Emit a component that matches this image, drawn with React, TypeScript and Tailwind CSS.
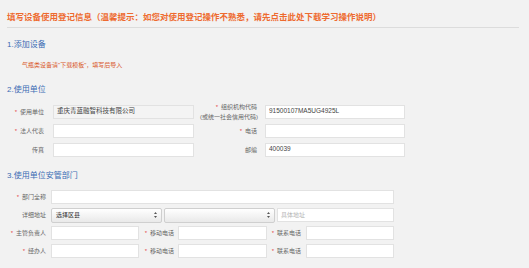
import React from 'react';

const cjk = { fontFamily: '"Liberation Sans", "Noto Sans CJK SC", sans-serif' };

const Star = () => <span className="text-[#e5484d] mr-[3px]">*</span>;

const Field: React.FC<{ w: string; value?: string; placeholder?: string; muted?: boolean }> = ({ w, value, placeholder, muted }) => (
  <div
    className={`${w} h-[14px] border border-[#e2e2e2] flex items-center px-[3px] text-[6.5px] leading-none ${
      muted ? 'bg-[#f4f4f4] text-[#444]' : 'bg-white text-[#444]'
    }`}
  >
    {value ? value : <span className="text-[#b5b5b5] text-[6px]">{placeholder}</span>}
  </div>
);

const FakeSelect: React.FC<{ w: string; label?: string }> = ({ w, label }) => (
  <div className={`${w} h-[15px] border border-[#cfcfcf] rounded-[2px] bg-gradient-to-b from-white to-[#e9e9e9] flex items-center justify-between px-[4px] text-[6px] text-[#333] leading-none`}>
    <span>{label}</span>
    <svg width="3" height="6" viewBox="0 0 3 6">
      <path d="M1.5 0 L3 2 L0 2 Z" fill="#555" />
      <path d="M0 4 L3 4 L1.5 6 Z" fill="#555" />
    </svg>
  </div>
);

const Label: React.FC<{ w: string; req?: boolean; children: React.ReactNode }> = ({ w, req, children }) => (
  <div className={`${w} shrink-0 text-right text-[6px] leading-[10px] text-[#666]`}>
    {req && <Star />}
    {children}
  </div>
);

export default function App() {
  return (
    <div className="w-[529px] h-[268px] bg-[#f2f2f2] overflow-hidden pl-[7px] pr-[10px]" style={cjk}>
      {/* Header */}
      <div className="pt-[11px] pb-[4px] border-b border-[#dcdcdc]">
        <div className="text-[8.5px] leading-[12px] font-bold text-[#ee6a2f] whitespace-nowrap">
          填写设备使用登记信息（温馨提示：如您对使用登记操作不熟悉，请先点击此处下载学习操作说明）
        </div>
      </div>

      {/* 1 */}
      <div className="mt-[11px] text-[8px] leading-[12px] text-[#3a6cb4]">1.添加设备</div>
      <div className="mt-[9px] pl-[15px] text-[6px] leading-[10px] text-[#d9582a]">
        气瓶类设备请"下载模板"，填写后导入
      </div>

      {/* 2 */}
      <div className="mt-[14px] text-[8px] leading-[12px] text-[#3a6cb4]">2.使用单位</div>
      <div className="mt-[6px] flex flex-col">
        <div className="h-[19px] flex items-center">
          <Label w="w-[37px]" req>使用单位</Label>
          <div className="ml-[9px]"><Field w="w-[141px]" value="重庆青蓝融智科技有限公司" muted /></div>
          <Label w="w-[63px]" req>
            组织机构代码
            <br />
            <span className="-mr-[1px]">(或统一社会信用代码)</span>
          </Label>
          <div className="ml-[8px]"><Field w="w-[140px]" value="91500107MA5UG4925L" /></div>
        </div>
        <div className="h-[19px] flex items-center">
          <Label w="w-[37px]" req>法人代表</Label>
          <div className="ml-[9px]"><Field w="w-[141px]" /></div>
          <Label w="w-[63px]" req>电话</Label>
          <div className="ml-[8px]"><Field w="w-[140px]" /></div>
        </div>
        <div className="h-[19px] flex items-center">
          <Label w="w-[37px]">传真</Label>
          <div className="ml-[9px]"><Field w="w-[141px]" /></div>
          <Label w="w-[63px]">邮编</Label>
          <div className="ml-[8px]"><Field w="w-[140px]" value="400039" /></div>
        </div>
      </div>

      {/* 3 */}
      <div className="mt-[11px] text-[8px] leading-[12px] text-[#3a6cb4]">3.使用单位安管部门</div>
      <div className="mt-[6px] flex flex-col">
        <div className="h-[18px] flex items-center">
          <Label w="w-[39px]" req>部门全称</Label>
          <div className="ml-[5px]"><Field w="w-[343px]" /></div>
        </div>
        <div className="h-[18px] flex items-center">
          <Label w="w-[39px]">详细地址</Label>
          <div className="ml-[5px] flex items-center gap-[2px]">
            <FakeSelect w="w-[111px]" label="选择区县" />
            <FakeSelect w="w-[111px]" />
            <Field w="w-[117px]" placeholder="具体地址" />
          </div>
        </div>
        <div className="h-[18px] flex items-center">
          <Label w="w-[39px]" req>主管负责人</Label>
          <div className="ml-[5px]"><Field w="w-[88px]" /></div>
          <Label w="w-[35px]" req>移动电话</Label>
          <div className="ml-[4px]"><Field w="w-[89px]" /></div>
          <Label w="w-[34px]" req>联系电话</Label>
          <div className="ml-[5px]"><Field w="w-[88px]" /></div>
        </div>
        <div className="h-[18px] flex items-center">
          <Label w="w-[39px]" req>经办人</Label>
          <div className="ml-[5px]"><Field w="w-[88px]" /></div>
          <Label w="w-[35px]" req>移动电话</Label>
          <div className="ml-[4px]"><Field w="w-[89px]" /></div>
          <Label w="w-[34px]" req>联系电话</Label>
          <div className="ml-[5px]"><Field w="w-[88px]" /></div>
        </div>
      </div>
    </div>
  );
}
